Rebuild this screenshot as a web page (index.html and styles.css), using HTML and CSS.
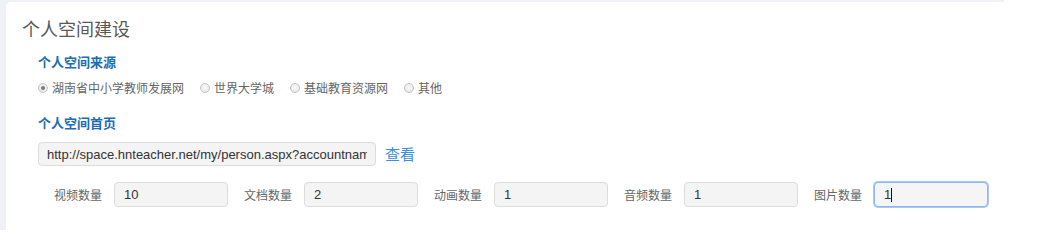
FILE: index.html
```html
<!DOCTYPE html>
<html lang="zh-CN">
<head>
<meta charset="utf-8">
<title>个人空间建设</title>
<link rel="stylesheet" href="styles.css">
</head>
<body>
<div class="page">
  <div class="card">
    <h2 class="title">个人空间建设</h2>
    <div class="section">
      <h3 class="sub">个人空间来源</h3>
      <div class="radios">
        <label class="radio"><span class="dot checked"></span>湖南省中小学教师发展网</label>
        <label class="radio"><span class="dot"></span>世界大学城</label>
        <label class="radio"><span class="dot"></span>基础教育资源网</label>
        <label class="radio"><span class="dot"></span>其他</label>
      </div>
      <h3 class="sub sub2">个人空间首页</h3>
      <div class="urlrow">
        <input class="url" type="text" value="http://space.hnteacher.net/my/person.aspx?accountname=zhangsan" readonly>
        <a class="view" href="#">查看</a>
      </div>
      <div class="counts">
        <label class="cnt"><span class="lbl">视频数量</span><input class="num" type="text" value="10"></label>
        <label class="cnt"><span class="lbl">文档数量</span><input class="num" type="text" value="2"></label>
        <label class="cnt"><span class="lbl">动画数量</span><input class="num" type="text" value="1"></label>
        <label class="cnt"><span class="lbl">音频数量</span><input class="num" type="text" value="1"></label>
        <label class="cnt"><span class="lbl">图片数量</span><span class="numwrap"><input class="num focus" type="text" value="1"><span class="caret"></span></span></label>
      </div>
    </div>
  </div>
</div>
</body>
</html>
```

FILE: styles.css
```css
html, body {
  margin: 0;
  padding: 0;
  background: #fff;
}
body {
  font-family: "Liberation Sans", "Noto Sans CJK SC", sans-serif;
  color: #666;
}
.page {
  width: 1004px;
  height: 230px;
  box-sizing: border-box;
  padding: 2px 0 0 6px;
  background: #eef1f5;
}
.card {
  height: 228px;
  box-sizing: border-box;
  background: #fff;
  border-top-left-radius: 5px;
  padding: 14px 16px 0 16px;
}
.title {
  margin: 0;
  font-family: "Noto Sans CJK SC", sans-serif;
  font-weight: normal;
  font-size: 18px;
  line-height: 24px;
  color: #595959;
}
.section {
  padding-left: 16px;
}
.sub {
  margin: 13px 0 0 0;
  font-family: "Noto Sans CJK SC", sans-serif;
  font-size: 13px;
  line-height: 18px;
  font-weight: bold;
  color: #1d6db2;
}
.sub2 {
  margin-top: 17px;
}
.radios {
  margin-top: 8px;
  display: flex;
  gap: 16px;
  font-family: "Noto Sans CJK SC", sans-serif;
  font-size: 12px;
  line-height: 18px;
  color: #666;
}
.radio {
  display: flex;
  align-items: center;
  gap: 4px;
}
.dot {
  width: 10px;
  height: 10px;
  box-sizing: border-box;
  border-radius: 50%;
  border: 1px solid #c4c4c4;
  background: radial-gradient(circle at 50% 40%, #fafafa, #e2e2e2);
  position: relative;
}
.dot.checked::after {
  content: "";
  position: absolute;
  left: 2px;
  top: 2px;
  width: 4px;
  height: 4px;
  border-radius: 50%;
  background: #777;
}
.urlrow {
  margin-top: 10px;
  display: flex;
  align-items: center;
  gap: 9px;
}
.url {
  width: 338px;
  height: 24px;
  box-sizing: border-box;
  border: 1px solid #dcdcdc;
  border-radius: 4px;
  background: #f4f4f4;
  padding: 0 8px;
  font-family: "Liberation Sans", sans-serif;
  font-size: 13px;
  color: #333;
  outline: none;
}
.view {
  font-family: "Noto Sans CJK SC", sans-serif;
  font-size: 15px;
  line-height: 24px;
  color: #3b8fdb;
  text-decoration: none;
}
.counts {
  margin-top: 16px;
  padding-left: 16px;
  display: flex;
  gap: 16px;
}
.cnt {
  display: flex;
  align-items: center;
  gap: 12px;
}
.lbl {
  font-family: "Noto Sans CJK SC", sans-serif;
  font-size: 12px;
  color: #666;
}
.numwrap {
  position: relative;
  display: block;
}
.num {
  display: block;
  width: 114px;
  height: 25px;
  box-sizing: border-box;
  border: 1px solid #dcdcdc;
  border-radius: 4px;
  background: #f4f4f4;
  padding: 0 9px;
  font-family: "Liberation Sans", sans-serif;
  font-size: 13px;
  color: #333;
  outline: none;
}
.num.focus {
  border-color: #8db6f2;
  box-shadow: 0 0 0 1px #a9c8f5;
  background: #f5f5f5;
}
.caret {
  position: absolute;
  left: 17px;
  top: 6px;
  width: 1px;
  height: 14px;
  background: #111;
}
```
